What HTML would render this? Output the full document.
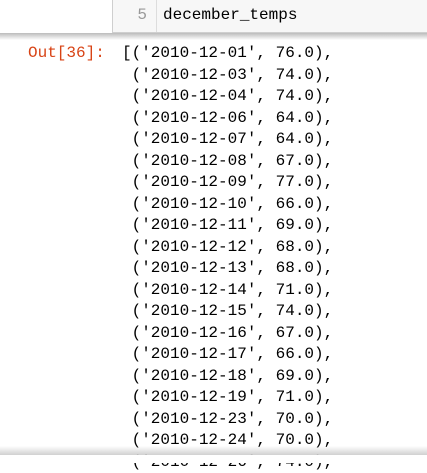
<!DOCTYPE html><html><head><style>
body{margin:0;width:427px;height:463px;overflow:hidden;background:#fff;position:relative;font-family:"Liberation Mono",monospace;}
.in{position:absolute;left:112px;top:-1px;width:320px;height:34px;background:#f7f7f7;border:1px solid #cfcfcf;box-sizing:border-box;}
.gut{position:absolute;left:0;top:0;width:43px;height:100%;border-right:1px solid #ddd;background:#f7f7f7;}
.gut span{position:absolute;right:9px;top:6px;color:#999;font-size:16px;}
.code{position:absolute;left:50px;top:6px;font-size:16px;color:#000;}
.sh{position:absolute;left:0;top:33px;width:427px;height:7px;background:linear-gradient(#bbb,#fff);}
.out{position:absolute;left:28px;top:43px;color:#d84315;font-size:16px;line-height:21.5px;}
pre{position:absolute;left:122px;top:43px;margin:0;font-family:"Liberation Mono",monospace;font-size:16px;line-height:21.5px;color:#000;}
.bot{position:absolute;left:0;top:446px;width:427px;height:9px;background:linear-gradient(rgba(255,255,255,0),rgba(200,200,200,.85));}
.wh{position:absolute;left:0;top:455px;width:427px;height:8px;background:#fff;}
</style></head><body>
<div class="in"><div class="gut"><span>5</span></div><div class="code">december_temps</div></div>
<div class="sh"></div>
<div class="out">Out[36]:</div>
<pre>[('2010-12-01', 76.0),
 ('2010-12-03', 74.0),
 ('2010-12-04', 74.0),
 ('2010-12-06', 64.0),
 ('2010-12-07', 64.0),
 ('2010-12-08', 67.0),
 ('2010-12-09', 77.0),
 ('2010-12-10', 66.0),
 ('2010-12-11', 69.0),
 ('2010-12-12', 68.0),
 ('2010-12-13', 68.0),
 ('2010-12-14', 71.0),
 ('2010-12-15', 74.0),
 ('2010-12-16', 67.0),
 ('2010-12-17', 66.0),
 ('2010-12-18', 69.0),
 ('2010-12-19', 71.0),
 ('2010-12-23', 70.0),
 ('2010-12-24', 70.0),
 ('2010-12-26', 74.0),</pre>
<div class="bot"></div><div class="wh"></div>
</body></html>
